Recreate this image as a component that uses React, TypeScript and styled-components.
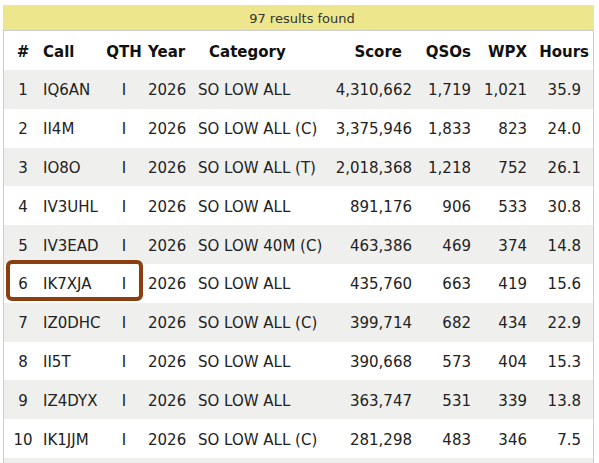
import React from 'react';
import styled, { createGlobalStyle } from 'styled-components';

const GlobalStyle = createGlobalStyle`
    body {
        margin: 0;
        background: #ffffff;
        font-family: 'DejaVu Sans', Verdana, sans-serif;
    }
`;

interface IResult {
    call: string;
    qth: string;
    year: string;
    category: string;
    score: string;
    qsos: string;
    wpx: string;
    hours: string;
}

const results: IResult[] = [
    { call: 'IQ6AN', qth: 'I', year: '2026', category: 'SO LOW ALL', score: '4,310,662', qsos: '1,719', wpx: '1,021', hours: '35.9' },
    { call: 'II4M', qth: 'I', year: '2026', category: 'SO LOW ALL (C)', score: '3,375,946', qsos: '1,833', wpx: '823', hours: '24.0' },
    { call: 'IO8O', qth: 'I', year: '2026', category: 'SO LOW ALL (T)', score: '2,018,368', qsos: '1,218', wpx: '752', hours: '26.1' },
    { call: 'IV3UHL', qth: 'I', year: '2026', category: 'SO LOW ALL', score: '891,176', qsos: '906', wpx: '533', hours: '30.8' },
    { call: 'IV3EAD', qth: 'I', year: '2026', category: 'SO LOW 40M (C)', score: '463,386', qsos: '469', wpx: '374', hours: '14.8' },
    { call: 'IK7XJA', qth: 'I', year: '2026', category: 'SO LOW ALL', score: '435,760', qsos: '663', wpx: '419', hours: '15.6' },
    { call: 'IZ0DHC', qth: 'I', year: '2026', category: 'SO LOW ALL (C)', score: '399,714', qsos: '682', wpx: '434', hours: '22.9' },
    { call: 'II5T', qth: 'I', year: '2026', category: 'SO LOW ALL', score: '390,668', qsos: '573', wpx: '404', hours: '15.3' },
    { call: 'IZ4DYX', qth: 'I', year: '2026', category: 'SO LOW ALL', score: '363,747', qsos: '531', wpx: '339', hours: '13.8' },
    { call: 'IK1JJM', qth: 'I', year: '2026', category: 'SO LOW ALL (C)', score: '281,298', qsos: '483', wpx: '346', hours: '7.5' },
];

const HIGHLIGHT = 'IK7XJA';

export default function App(): JSX.Element {
    return (
        <>
            <GlobalStyle />
            <Page>
                <Banner>97 results found</Banner>
                <Table>
                    <HeadRow>
                        <Cell $col="rank">#</Cell>
                        <Cell $col="call">Call</Cell>
                        <Cell $col="qth">QTH</Cell>
                        <Cell $col="year">Year</Cell>
                        <HeadCategory>Category</HeadCategory>
                        <HeadScore>Score</HeadScore>
                        <Cell $col="num">QSOs</Cell>
                        <Cell $col="num">WPX</Cell>
                        <HeadHours>Hours</HeadHours>
                    </HeadRow>
                    {results.map((r, i) => (
                        <Row key={r.call} $striped={i % 2 === 0}>
                            <Cell $col="rank">{i + 1}</Cell>
                            <Cell $col="call">{r.call}</Cell>
                            <Cell $col="qth">{r.qth}</Cell>
                            <Cell $col="year">{r.year}</Cell>
                            <Cell $col="category">{r.category}</Cell>
                            <Cell $col="num">{r.score}</Cell>
                            <Cell $col="num">{r.qsos}</Cell>
                            <Cell $col="num">{r.wpx}</Cell>
                            <HoursCell>{r.hours}</HoursCell>
                            {r.call === HIGHLIGHT && <Marker />}
                        </Row>
                    ))}
                    {/* next row, only its top edge shows in the frame */}
                    <Row $striped />
                </Table>
            </Page>
        </>
    );
}

const Page = styled.div`
    width: 591px;
    margin: 5px 0 0 3px;
`;

const Banner = styled.div`
    height: 25px;
    background: #eee68c;
    color: #333333;
    font-size: 13px;
    line-height: 25px;
    text-align: center;
    padding: 1px 0 0 7px;
    box-sizing: border-box;
`;

const Table = styled.div`
    border: 1px solid #cccccc;
    border-bottom: none;
    font-size: 15px;
    color: #222222;
`;

const rowColumns = '38px 62px 40px 48px 143px 77px 59px 56px 62px';

const HeadRow = styled.div`
    display: grid;
    grid-template-columns: ${rowColumns};
    align-items: center;
    height: 39px;
    box-sizing: border-box;
    padding-top: 3px;
    font-weight: bold;
    color: #111111;
`;

const Row = styled.div<{ $striped?: boolean }>`
    position: relative;
    display: grid;
    grid-template-columns: ${rowColumns};
    align-items: center;
    height: 38.8px;
    box-sizing: border-box;
    padding-top: 2px;
    background: ${({ $striped }) => ($striped ? '#eff0ee' : '#ffffff')};
`;

type Col = 'rank' | 'call' | 'qth' | 'year' | 'category' | 'num';

const Cell = styled.div<{ $col: Col }>`
    white-space: nowrap;
    text-align: ${({ $col }) =>
        $col === 'rank' || $col === 'qth' ? 'center' : $col === 'num' ? 'right' : 'left'};
    padding-left: ${({ $col }) =>
        $col === 'call' ? '1px' : $col === 'year' ? '4px' : $col === 'category' ? '6px' : '0'};
`;

const HeadCategory = styled.div`
    white-space: nowrap;
    padding-left: 17px;
`;

const HeadScore = styled.div`
    text-align: right;
    padding-right: 10px;
`;

const HeadHours = styled.div`
    text-align: right;
`;

const HoursCell = styled.div`
    text-align: right;
    padding-right: 8px;
`;

const Marker = styled.div`
    position: absolute;
    left: 2px;
    top: -4px;
    width: 137px;
    height: 41px;
    box-sizing: border-box;
    border: 4px solid #8b3f10;
    border-radius: 6px;
    pointer-events: none;
`;
